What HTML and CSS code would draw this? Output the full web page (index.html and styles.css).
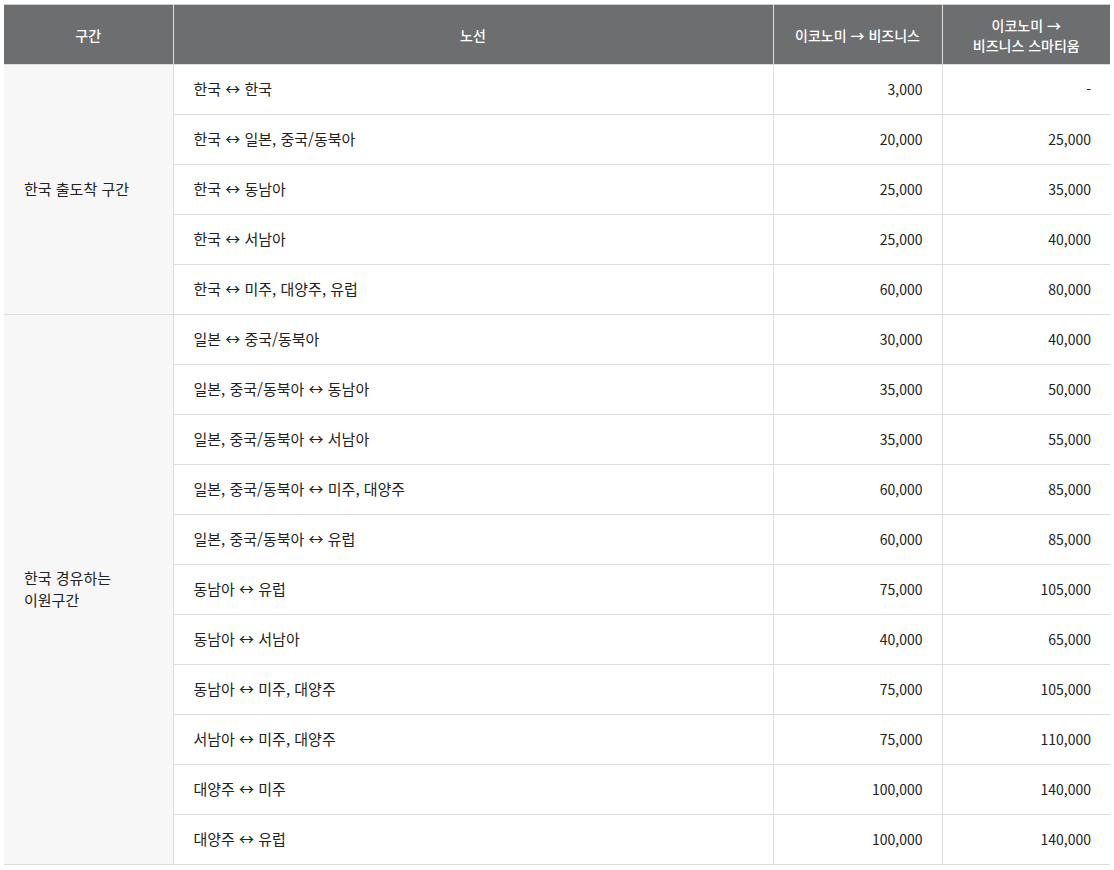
FILE: index.html
```html
<!DOCTYPE html>
<html lang="ko">

<head>
    <meta charset="UTF-8">
    <meta name="viewport" content="width=device-width, initial-scale=1.0">
    <title>업그레이드 마일리지 공제표</title>
    <link rel="stylesheet" href="styles.css">
</head>

<body>
    <table class="mile-table">
        <colgroup>
            <col class="col-zone">
            <col class="col-route">
            <col class="col-num">
            <col class="col-num2">
        </colgroup>
        <thead>
            <tr>
                <th>구간</th>
                <th>노선</th>
                <th>이코노미 → 비즈니스</th>
                <th>이코노미 →<br>비즈니스 스마티움</th>
            </tr>
        </thead>
        <tbody>
            <tr>
                <td class="zone" rowspan="5">한국 출도착 구간</td>
                <td>한국 ↔ 한국</td>
                <td class="num">3,000</td>
                <td class="num">-</td>
            </tr>
            <tr>
                <td>한국 ↔ 일본, 중국/동북아</td>
                <td class="num">20,000</td>
                <td class="num">25,000</td>
            </tr>
            <tr>
                <td>한국 ↔ 동남아</td>
                <td class="num">25,000</td>
                <td class="num">35,000</td>
            </tr>
            <tr>
                <td>한국 ↔ 서남아</td>
                <td class="num">25,000</td>
                <td class="num">40,000</td>
            </tr>
            <tr>
                <td>한국 ↔ 미주, 대양주, 유럽</td>
                <td class="num">60,000</td>
                <td class="num">80,000</td>
            </tr>
            <tr>
                <td class="zone" rowspan="11">한국 경유하는<br>이원구간</td>
                <td>일본 ↔ 중국/동북아</td>
                <td class="num">30,000</td>
                <td class="num">40,000</td>
            </tr>
            <tr>
                <td>일본, 중국/동북아 ↔ 동남아</td>
                <td class="num">35,000</td>
                <td class="num">50,000</td>
            </tr>
            <tr>
                <td>일본, 중국/동북아 ↔ 서남아</td>
                <td class="num">35,000</td>
                <td class="num">55,000</td>
            </tr>
            <tr>
                <td>일본, 중국/동북아 ↔ 미주, 대양주</td>
                <td class="num">60,000</td>
                <td class="num">85,000</td>
            </tr>
            <tr>
                <td>일본, 중국/동북아 ↔ 유럽</td>
                <td class="num">60,000</td>
                <td class="num">85,000</td>
            </tr>
            <tr>
                <td>동남아 ↔ 유럽</td>
                <td class="num">75,000</td>
                <td class="num">105,000</td>
            </tr>
            <tr>
                <td>동남아 ↔ 서남아</td>
                <td class="num">40,000</td>
                <td class="num">65,000</td>
            </tr>
            <tr>
                <td>동남아 ↔ 미주, 대양주</td>
                <td class="num">75,000</td>
                <td class="num">105,000</td>
            </tr>
            <tr>
                <td>서남아 ↔ 미주, 대양주</td>
                <td class="num">75,000</td>
                <td class="num">110,000</td>
            </tr>
            <tr>
                <td>대양주 ↔ 미주</td>
                <td class="num">100,000</td>
                <td class="num">140,000</td>
            </tr>
            <tr>
                <td>대양주 ↔ 유럽</td>
                <td class="num">100,000</td>
                <td class="num">140,000</td>
            </tr>
        </tbody>
    </table>
</body>

</html>
```

FILE: styles.css
```css
body {
    margin: 4px;
    background-color: #fff;
    font-family: "Noto Sans CJK KR", "Noto Sans", sans-serif;
    font-size: 14px;
    color: #222;
}

.mile-table {
    width: 1106px;
    border-collapse: collapse;
    table-layout: fixed;
    border-top: 1px solid #ccc;
    border-bottom: 1px solid #ddd;
}

.col-zone {
    width: 169px;
}

.col-route {
    width: 600px;
}

.col-num {
    width: 169px;
}

.col-num2 {
    width: 168px;
}

.mile-table th {
    height: 59px;
    padding: 0 10px;
    background-color: #6d6e70;
    color: #fff;
    font-weight: 500;
    text-align: center;
    line-height: 20px;
    border-left: 1px solid #ddd;
}

.mile-table th:first-child {
    border-left: none;
}

.mile-table td {
    height: 47px;
    padding: 0 19px 2px 20px;
    border-top: 1px solid #ddd;
    border-left: 1px solid #ddd;
    font-size: 15px;
    line-height: 22px;
    vertical-align: middle;
}

.mile-table td.zone {
    background-color: #f7f7f7;
    border-left: none;
}

.mile-table td.num {
    font-size: 14px;
    text-align: right;
}
```
